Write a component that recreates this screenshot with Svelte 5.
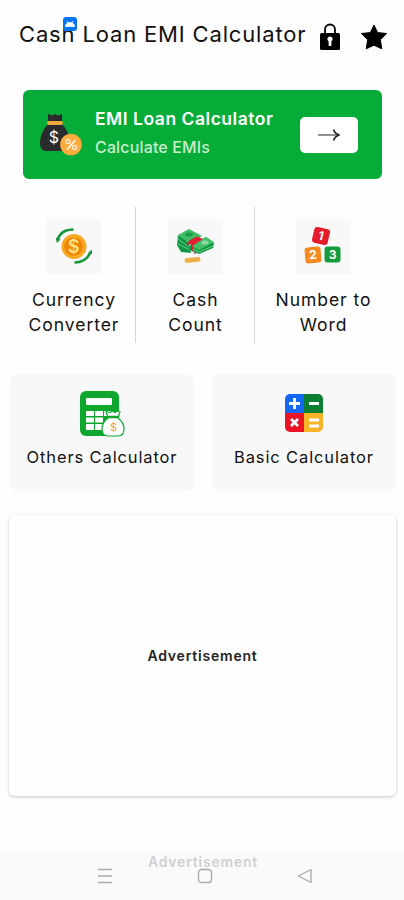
<script>
    const tools = [
        { icon: "currency", lines: ["Currency", "Converter"] },
        { icon: "cash", lines: ["Cash", "Count"] },
        { icon: "number", lines: ["Number to", "Word"] },
    ];
</script>

<main>
    <header>
        <h1>
            Cash Loan EMI Calculator
            <span class="badge">
                <svg width="14" height="14" viewBox="0 0 14 14">
                    <rect width="14" height="14" rx="3" fill="#0873f4" />
                    <path d="M2.5 9.5C2.5 7 4.5 5.5 7 5.5s4.500 1.500 4.500 4zM4 4l1.500 2.500M10 4L8.500 6.500" fill="#fff" stroke="#fff" stroke-width=".8" />
                </svg>
            </span>
        </h1>
        <svg class="lock" width="22" height="28" viewBox="0 0 22 28">
            <path d="M6 12V6.500a5 5 0 0 1 10 0V12" fill="none" stroke="#000" stroke-width="1.800" />
            <rect x="1" y="10" width="20" height="17" rx="1.500" />
            <path d="M11 13.500a2.600 2.600 0 0 1 1.400 4.800V23H9.600v-4.700A2.600 2.600 0 0 1 11 13.500z" fill="#fff" />
        </svg>
        <svg class="star" width="28" height="28" viewBox="0 0 28 28">
            <path d="M14 2l3.600 7.600 9 .9-6.300 6.300 1.500 9-7.800-3.600-7.800 3.600 1.500-9-6.300-6.300 9-.9z" stroke="#000" stroke-linejoin="round" />
        </svg>
    </header>

    <section class="banner">
        <svg class="bag" width="44" height="44" viewBox="0 0 44 44">
            <path d="M8 1l4 1.500L15 1l3 1.500L22 1v7H8z" fill="#292b2d" />
            <path d="M9 10h12c5 5 9 12 9 20 0 6-2 8-6 8H6c-4 0-6-3-6-8C0 22 4 15 9 10z" fill="#292b2d" />
            <rect x="7" y="8" width="16" height="4" rx="2" fill="#eea83c" />
            <text x="14" y="30" text-anchor="middle" font-size="16" fill="#fff">$</text>
            <circle cx="31" cy="31.500" r="10.800" fill="#ffac3d" />
            <path d="M27 36.500L35.500 27" stroke="#fff" stroke-width="1.500" />
            <circle cx="28" cy="28.500" r="2" fill="none" stroke="#ffe9cf" stroke-width="1.300" />
            <circle cx="34.500" cy="34.500" r="2" fill="none" stroke="#ffe9cf" stroke-width="1.300" />
        </svg>
        <div class="banner-text">
            <h2>EMI Loan Calculator</h2>
            <p>Calculate EMIs</p>
        </div>
        <button aria-label="Open EMI calculator">
            <svg width="24" height="14" viewBox="0 0 24 14">
                <path d="M1 7h20" stroke="#777" stroke-width="1.600" />
                <path d="M16.500 1.500Q18 6 22.500 7 18 8 16.500 12.500" fill="none" stroke="#222" stroke-width="1.600" />
            </svg>
        </button>
    </section>

    <section class="tools">
        {#each tools as tool}
            <div class="tool {tool.icon}">
                <div class="tile">
                    {#if tool.icon === "currency"}
                        <svg width="55" height="55" viewBox="0 0 55 55">
                            <circle cx="28" cy="27.500" r="12.500" fill="#f9a824" />
                            <circle cx="27.500" cy="27.500" r="9.300" fill="#ed8505" />
                            <text x="27.500" y="34" text-anchor="middle" font-size="18" font-weight="600" fill="#ffe082">$</text>
                            <path d="M27.500 10.500C19 10.500 13.500 14 11.500 21M28.500 43.500C37 43.500 42 39.500 44.500 33" fill="none" stroke="#19963a" stroke-width="2.500" />
                            <path d="M9.800 18.500l1 5.500 3.700-3.500zM45.800 30.500l-4 4 4.200.500z" fill="#19963a" />
                        </svg>
                    {:else if tool.icon === "cash"}
                        <svg width="55" height="55" viewBox="0 0 55 55">
                            <path d="M10 16l11 7 2 11-10-1-4-7z" fill="#129646" />
                            <path d="M10 16l11-6 13 7-12 8z" fill="#3fbd63" />
                            <path d="M10 20l11 8M10 25l12 6" stroke="#5fd080" stroke-width="1" />
                            <path d="M21 27l17-9 8 6-1 5-14 6-10-4z" fill="#149a45" />
                            <path d="M22 26l16-8 8 5-15 8z" fill="#43c068" />
                            <path d="M24 30l7 3 14-6" fill="none" stroke="#5fd080" stroke-width="1" />
                            <ellipse cx="21" cy="15.500" rx="4" ry="2" fill="#1d9a4b" />
                            <ellipse cx="37" cy="23.500" rx="3.500" ry="2" fill="#8adba0" />
                            <path d="M18 26l4-5 7-3.500 6 2.500-10 6.500v5.500l-2-1v-6z" fill="#e01f30" />
                            <path d="M25 34l3-1v2z" fill="#e01f30" />
                            <rect x="16.500" y="38.500" width="16" height="5" rx="2.500" fill="#edb04a" transform="rotate(-6 24 41)" />
                        </svg>
                    {:else}
                        <svg width="55" height="55" viewBox="0 0 55 55">
                            <g font-size="12" font-weight="700" fill="#fff" text-anchor="middle">
                                <rect x="17" y="9" width="16" height="16" rx="3" fill="#e51c2b" transform="rotate(13 25 17)" />
                                <text x="25" y="21" transform="rotate(13 25 17)">1</text>
                                <rect x="9" y="28" width="16" height="16" rx="3" fill="#f68a1e" transform="rotate(-5 17 36)" />
                                <text x="17" y="40" transform="rotate(-5 17 36)">2</text>
                                <rect x="28.500" y="27.500" width="16" height="16" rx="3" fill="#119b3d" />
                                <text x="36.500" y="40">3</text>
                            </g>
                        </svg>
                    {/if}
                </div>
                <p class="label">{tool.lines[0]}<br />{tool.lines[1]}</p>
            </div>
        {/each}
    </section>

    <section class="cards">
        <div class="card">
            <svg width="46" height="46" viewBox="0 0 46 46">
                <rect x="1" y="0" width="39" height="45" rx="6" fill="#0da72e" />
                <rect x="7" y="7" width="26" height="7" rx="1" fill="#fff" />
                <path d="M7 20h8v5H7zM16 20h8v5h-8zM25 20h7v5h-7zM7 26.500h8v5H7zM16 26.500h8v5h-8zM7 33h8v6H7zM16 33h8v6h-8z" fill="#fff" />
                <path d="M29 27c-4 3-6 6-6 11 0 5 2 7 6 7h10c4 0 6-2 6-7 0-5-2-8-6-11l2-6-3-1-2 1.500L33.500 20 31 21.500 27 20.500z" fill="#fff" stroke="#0da72e" stroke-width="1.200" stroke-linejoin="round" />
                <path d="M28.500 26h11" stroke="#0da72e" stroke-width="2.500" />
                <text x="34.500" y="40" font-size="11" text-anchor="middle" fill="#eca435">$</text>
            </svg>
            <p class="card-label">Others Calculator</p>
        </div>
        <div class="card">
            <svg width="46" height="46" viewBox="0 0 46 46">
                <path d="M9 3h14v19H4V8a5 5 0 0 1 5-5z" fill="#1468ef" />
                <path d="M23 3h14a5 5 0 0 1 5 5v14H23z" fill="#0b7e31" />
                <path d="M4 22h19v19H9a5 5 0 0 1-5-5z" fill="#eb1425" />
                <path d="M23 22h19v14a5 5 0 0 1-5 5H23z" fill="#f9b52a" />
                <path d="M8 12.500h11M13.500 7v11M28 12.500h10M10 28l7 7m0-7l-7 7M28 29h10M28 35h10" stroke="#fff" stroke-width="2.800" />
            </svg>
            <p class="card-label">Basic Calculator</p>
        </div>
    </section>

    <section class="ad">
        <p>Advertisement</p>
    </section>

    <footer>
        <p>Advertisement</p>
        <nav>
            <svg width="16" height="16" viewBox="0 0 16 16"><path d="M1 1.500h14M1 8h14M1 14.500h14" /></svg>
            <svg width="16" height="16" viewBox="0 0 16 16"><rect x="1.500" y="1.500" width="13" height="13" rx="3" /></svg>
            <svg width="16" height="16" viewBox="0 0 16 16"><path d="M14 1.500v13L1.500 8z" stroke-linejoin="round" /></svg>
        </nav>
    </footer>
</main>

<style>
    :global(body) {
        background: #fefefe;
    }
    main {
        width: 404px;
        height: 900px;
        display: flex;
        flex-direction: column;
        overflow: hidden;
        font-family: Inter, "Liberation Sans", sans-serif;
        color: #111;
        background: #fefefe;
    }
    svg {
        display: block;
        flex-shrink: 0;
    }
    p,
    h1,
    h2 {
        margin: 0;
        white-space: nowrap;
    }
    header {
        height: 90px;
        box-sizing: border-box;
        padding: 18px 0 0 19px;
        display: flex;
        align-items: flex-start;
    }
    h1 {
        position: relative;
        width: 300px;
        font-size: 22px;
        font-weight: 400;
        line-height: 32px;
        letter-spacing: 0.84px;
    }
    .badge {
        position: absolute;
        left: 44px;
        top: -1px;
    }
    .lock {
        margin-top: 5px;
    }
    .star {
        margin: 5px 0 0 19px;
    }
    .banner {
        height: 89px;
        margin: 0 22px 0 23px;
        display: flex;
        align-items: center;
        border-radius: 6px;
        background: #05ad38;
    }
    .bag {
        margin-left: 17px;
    }
    .banner-text {
        width: 182px;
        margin-left: 11px;
        padding-bottom: 3px;
    }
    h2 {
        font-size: 17.5px;
        font-weight: 600;
        line-height: 28px;
        letter-spacing: 0.52px;
        color: #fff;
    }
    .banner-text p {
        font-size: 16px;
        font-weight: 500;
        line-height: 28px;
        letter-spacing: 0.15px;
        color: #c8edcf;
    }
    button {
        width: 58px;
        height: 36px;
        margin-left: 23px;
        padding: 0;
        display: grid;
        place-items: center;
        border: 0;
        border-radius: 5px;
        background: #fff;
    }
    .tools {
        height: 136px;
        margin-top: 28px;
        display: grid;
        grid-template-columns: 136px 119px 149px;
    }
    .tool {
        display: flex;
        flex-direction: column;
        align-items: center;
        padding-top: 12px;
        border-right: 1px solid #d5d5d5;
    }
    .currency {
        padding-left: 12px;
    }
    .number {
        border: 0;
        padding-right: 13px;
    }
    .tile {
        width: 55px;
        height: 55px;
        background: #f8f8f8;
    }
    .label {
        margin-top: 13px;
        padding-left: 1px;
        font-size: 17.5px;
        line-height: 25px;
        letter-spacing: 0.95px;
        text-align: center;
    }
    .cards {
        display: grid;
        grid-template-columns: 184px 184px;
        gap: 18px;
        margin: 31px 8px 0 10px;
    }
    .card {
        height: 117px;
        box-sizing: border-box;
        padding-top: 17px;
        display: flex;
        flex-direction: column;
        align-items: center;
        border-radius: 8px;
        background: #f8f8f8;
    }
    .card-label {
        margin-top: 7px;
        font-size: 16.5px;
        line-height: 26px;
        letter-spacing: 0.87px;
    }
    .ad {
        height: 281px;
        margin: 24px 8px 0 9px;
        display: grid;
        place-items: center;
        border-radius: 5px;
        background: #fefefe;
        box-shadow: 0 1px 3px #c4c4c4;
    }
    .ad p,
    footer p {
        font-size: 14px;
        font-weight: 600;
        line-height: 20px;
        letter-spacing: 0.8px;
        color: #222;
    }
    footer {
        height: 48px;
        margin-top: auto;
        background: #fafafa;
    }
    footer p {
        padding-left: 2px;
        text-align: center;
        color: #d0d0d0;
    }
    nav {
        display: flex;
        justify-content: center;
        gap: 84px;
        margin-top: -4px;
        padding-left: 5px;
    }
    nav svg {
        fill: none;
        stroke: #aaa;
        stroke-width: 1.3;
    }
</style>
